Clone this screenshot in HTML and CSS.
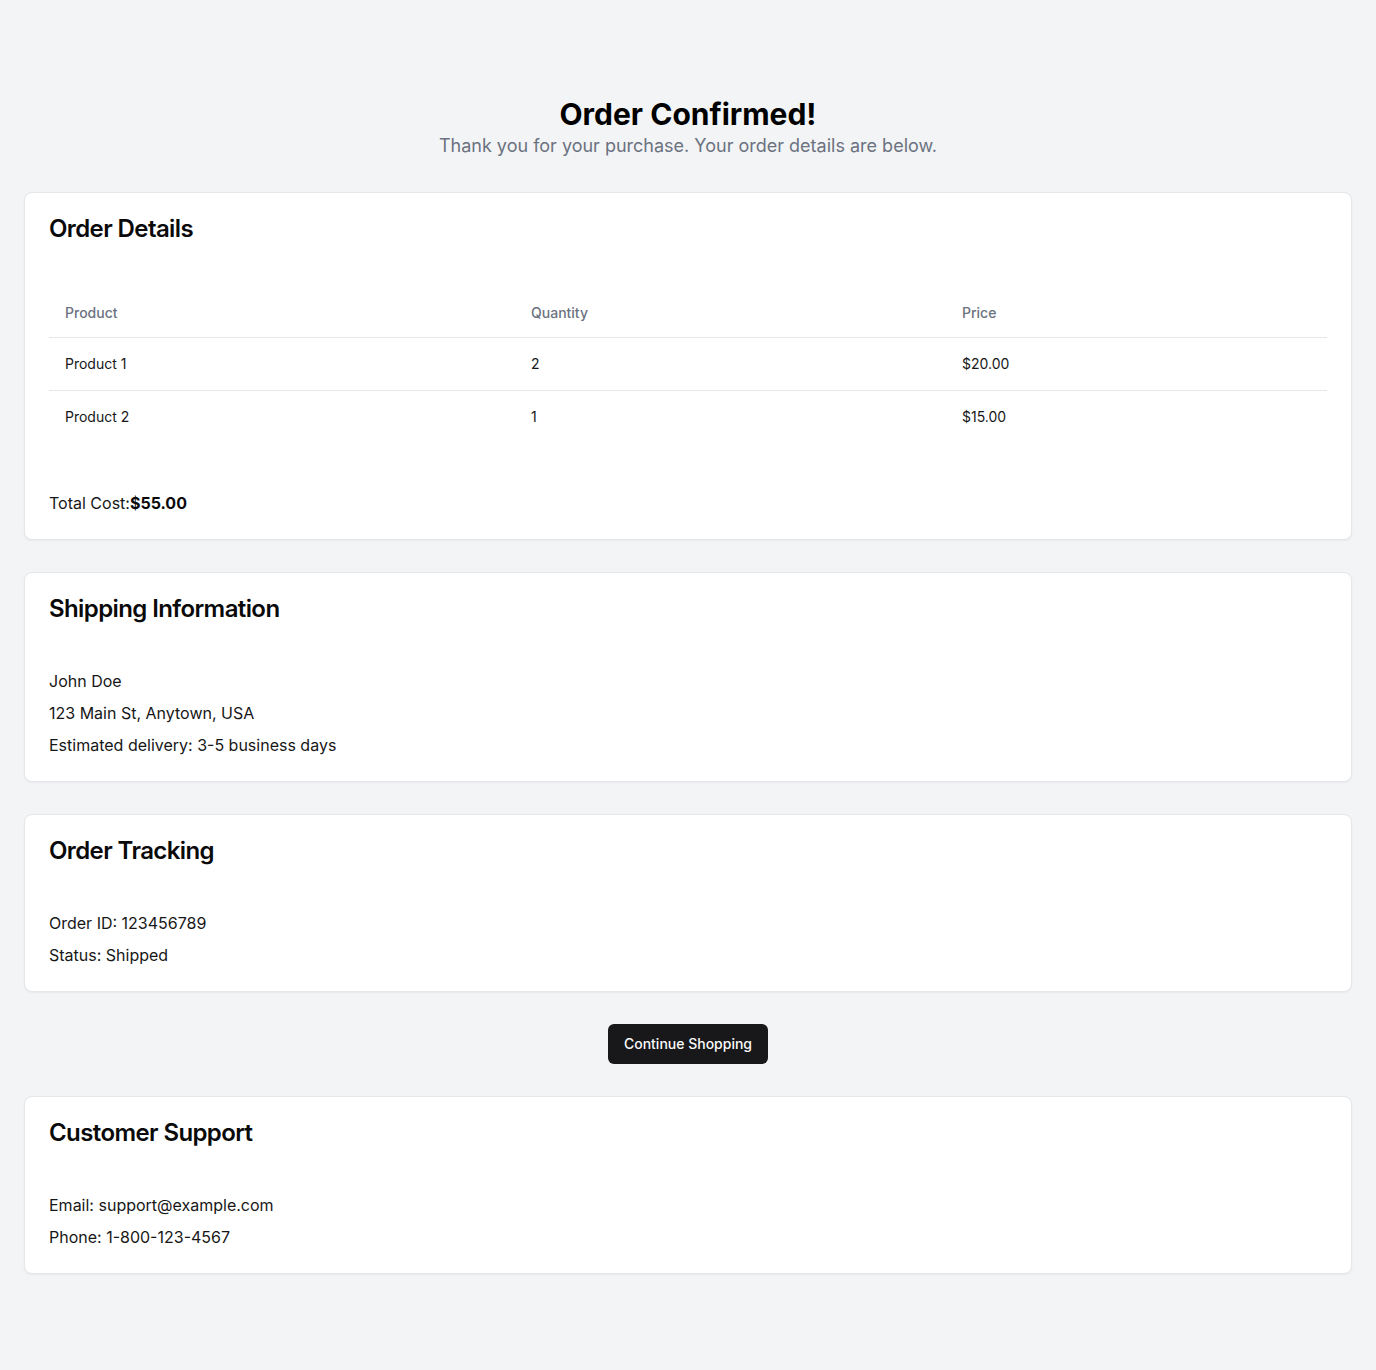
FILE: index.html
```html
<!DOCTYPE html>
<html lang="en">
<head>
<meta charset="utf-8">
<title>Order Confirmed</title>
<link rel="stylesheet" href="styles.css">
</head>
<body>
<main class="page">
  <header class="hero">
    <h1 class="hero-title">Order Confirmed!</h1>
    <p class="hero-sub">Thank you for your purchase. Your order details are below.</p>
  </header>

  <section class="card">
    <div class="card-header"><h2 class="card-title">Order Details</h2></div>
    <div class="card-content">
      <table class="table">
        <colgroup><col class="col-a"><col class="col-b"><col></colgroup>
        <thead>
          <tr><th>Product</th><th>Quantity</th><th>Price</th></tr>
        </thead>
        <tbody>
          <tr><td>Product 1</td><td>2</td><td>$20.00</td></tr>
          <tr><td>Product 2</td><td>1</td><td>$15.00</td></tr>
        </tbody>
      </table>
      <p class="total">Total Cost:<strong>$55.00</strong></p>
    </div>
  </section>

  <section class="card">
    <div class="card-header"><h2 class="card-title">Shipping Information</h2></div>
    <div class="card-content lines">
      <p>John Doe</p>
      <p>123 Main St, Anytown, USA</p>
      <p>Estimated delivery: 3-5 business days</p>
    </div>
  </section>

  <section class="card">
    <div class="card-header"><h2 class="card-title">Order Tracking</h2></div>
    <div class="card-content lines">
      <p>Order ID: 123456789</p>
      <p>Status: Shipped</p>
    </div>
  </section>

  <div class="actions">
    <button class="btn" type="button">Continue Shopping</button>
  </div>

  <section class="card">
    <div class="card-header"><h2 class="card-title">Customer Support</h2></div>
    <div class="card-content lines">
      <p>Email: support@example.com</p>
      <p>Phone: 1-800-123-4567</p>
    </div>
  </section>
</main>
</body>
</html>
```
FILE: styles.css
```css
* { box-sizing: border-box; }
html, body { margin: 0; padding: 0; }
body {
  background: #f3f4f6;
  font-family: Inter, "Noto Sans", "Liberation Sans", sans-serif;
  color: #0a0a0a;
  -webkit-font-smoothing: antialiased;
}
p, h1, h2 { margin: 0; }
.page {
  padding: 96px 24px 96px;
  display: flex;
  flex-direction: column;
  gap: 32px;
}
.hero { text-align: center; }
.hero-title {
  font-size: 30px;
  line-height: 36px;
  font-weight: 700;
  color: #000;
}
.hero-sub {
  font-size: 18px;
  line-height: 28px;
  color: #6b7280;
}
.card {
  background: #fff;
  border: 1px solid #e5e7eb;
  border-radius: 8px;
  box-shadow: 0 1px 2px rgba(0,0,0,0.05);
}
.card-header { padding: 24px; }
.card-title {
  font-size: 24px;
  line-height: 24px;
  font-weight: 600;
  letter-spacing: -0.6px;
  color: #0a0a0a;
}
.card-content { padding: 24px; }
.lines { display: flex; flex-direction: column; gap: 8px; }
.lines p { font-size: 16px; line-height: 24px; color: #171717; }
.table {
  width: 100%;
  border-collapse: collapse;
  font-size: 14px;
  line-height: 20px;
}
.col-a { width: 466px; }
.col-b { width: 431px; }
.table th {
  height: 48px;
  padding: 0 16px;
  text-align: left;
  font-weight: 500;
  color: #6b7280;
  border-bottom: 1px solid #e5e7eb;
}
.table td {
  padding: 16px;
  color: #171717;
}
.table tbody tr { border-bottom: 1px solid #e5e7eb; }
.table tbody tr:last-child { border-bottom: none; }
.total {
  margin-top: 48px;
  font-size: 16px;
  line-height: 24px;
  color: #171717;
}
.total strong { font-weight: 700; color: #0a0a0a; }
.actions { display: flex; justify-content: center; }
.btn {
  height: 40px;
  padding: 0 16px;
  border: none;
  border-radius: 6px;
  background: #18181b;
  color: #fafafa;
  font-family: Inter, "Noto Sans", sans-serif;
  font-size: 14px;
  font-weight: 500;
  cursor: pointer;
}
```
